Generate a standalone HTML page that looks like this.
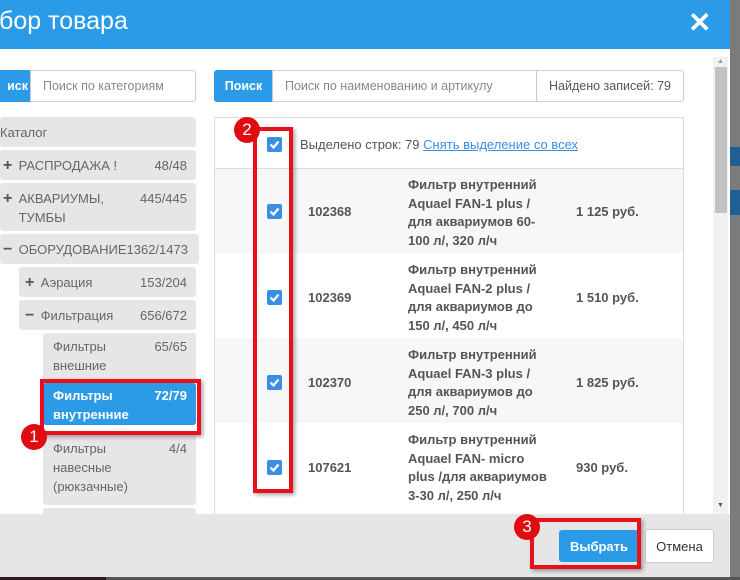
<!DOCTYPE html>
<html><head><meta charset="utf-8"><style>
*{box-sizing:border-box;margin:0;padding:0}
body{width:740px;height:580px;overflow:hidden;background:#7b7b7b;font-family:"Liberation Sans",sans-serif;font-size:12.5px;color:#555;position:relative}
.a{position:absolute}
.modal{left:0;top:0;width:730px;height:577px;background:#fff;overflow:hidden}
.hdr{left:0;top:0;width:730px;height:49px;background:#2b9be8}
.btn{background:#2b9be8;color:#fff;font-weight:bold;border-radius:3px 0 0 3px;display:flex;align-items:center;justify-content:center}
.inp{border:1px solid #ccc;color:#888;display:flex;align-items:center;padding-left:12px}
.ti{background:#e6e6e6;border-radius:3px;color:#666;font-size:13px}
.ti .c{position:absolute;right:9px;top:6px;line-height:19px}
.ti .t{position:absolute;top:6px;line-height:19px}
.p{display:inline-block;width:12px;font-weight:bold;font-size:16px;line-height:19px;color:#555;vertical-align:top}
.cb{width:15px;height:15px;background:#3a8ee6;border-radius:2px}
.cb svg{display:block}
.b{font-weight:bold;color:#555;font-size:13px}
.red{border:4px solid #e8101a;box-shadow:2px 2px 4px rgba(0,0,0,.35)}
.badge{width:26px;height:26px;border-radius:50%;background:#e00c12;color:#fff;font-size:17px;display:flex;align-items:center;justify-content:center}
</style></head><body>
<div class="a" style="left:730px;top:147px;width:10px;height:19px;background:#1f5f93"></div>
<div class="a" style="left:730px;top:190px;width:10px;height:25px;background:#1f5f93"></div>
<div class="a" style="left:0;top:577px;width:106px;height:3px;background:#2a1a22"></div>
<div class="a" style="left:106px;top:577px;width:634px;height:3px;background:#555"></div>
<div class="a modal">
<div class="a hdr"></div>
<div class="a" style="left:-1px;top:4px;color:#fff;font-size:25px;line-height:34px">бор товара</div>
<div class="a" style="left:688px;top:6px;color:#fff;font-size:28px;font-weight:bold">✕</div>

<div class="a btn" style="left:0;top:70px;width:31px;height:32px;border-radius:0;justify-content:flex-end;padding-right:3px">иск</div>
<div class="a inp" style="left:30px;top:70px;width:166px;height:32px;border-radius:0 3px 3px 0">Поиск по категориям</div>

<div class="a ti" style="left:0;top:117px;width:196px;height:30px"><span class="t" style="left:0">Каталог</span></div>
<div class="a ti" style="left:0;top:150px;width:196px;height:30px"><span class="t" style="left:3px"><span class="p">+</span> РАСПРОДАЖА !</span><span class="c">48/48</span></div>
<div class="a ti" style="left:0;top:183px;width:196px;height:48px"><span class="t" style="left:3px"><span class="p">+</span> АКВАРИУМЫ,<br><span class="p"></span> ТУМБЫ</span><span class="c">445/445</span></div>
<div class="a ti" style="left:0;top:234px;width:199px;height:30px"><span class="t" style="left:3px"><span class="p">−</span> ОБОРУДОВАНИЕ1362/1473</span></div>
<div class="a ti" style="left:19px;top:267px;width:177px;height:30px"><span class="t" style="left:6px"><span class="p">+</span> Аэрация</span><span class="c">153/204</span></div>
<div class="a ti" style="left:19px;top:300px;width:177px;height:30px"><span class="t" style="left:6px"><span class="p">−</span> Фильтрация</span><span class="c">656/672</span></div>
<div class="a ti" style="left:43px;top:333px;width:153px;height:47px"><span class="t" style="left:10px;top:4px">Фильтры<br>внешние</span><span class="c" style="top:4px">65/65</span></div>
<div class="a ti" style="left:43px;top:383px;width:153px;height:42px;background:#2b9be8;color:#fff;font-weight:bold"><span class="t" style="left:10px;top:3px">Фильтры<br>внутренние</span><span class="c" style="top:3px">72/79</span></div>
<div class="a ti" style="left:43px;top:432px;width:153px;height:73px"><span class="t" style="left:10px;top:7px">Фильтры<br>навесные<br>(рюкзачные)</span><span class="c" style="top:7px">4/4</span></div>
<div class="a ti" style="left:43px;top:508px;width:153px;height:10px"></div>

<div class="a btn" style="left:214px;top:70px;width:59px;height:32px">Поиск</div>
<div class="a inp" style="left:272px;top:70px;width:265px;height:32px">Поиск по наименованию и артикулу</div>
<div class="a inp" style="left:536px;top:70px;width:148px;height:32px;color:#555;border-radius:0 3px 3px 0">Найдено записей: 79</div>

<div class="a" style="left:214px;top:117px;width:470px;height:400px;border:1px solid #ddd"></div>
<div class="a" style="left:215px;top:168px;width:468px;height:1px;background:#ddd"></div>
<div class="a" style="left:215px;top:169px;width:468px;height:84px;background:#f7f7f7"></div>
<div class="a" style="left:215px;top:338px;width:468px;height:85px;background:#f7f7f7"></div>
<div class="a" style="left:300px;top:137px;font-size:13px;color:#555">Выделено строк: 79 <span style="color:#3a8ee6;text-decoration:underline">Снять выделение со всех</span></div>

<div class="a cb" style="left:267px;top:137px"><svg width="15" height="15"><path d="M3.5 7.5l3 3 5-6" stroke="#fff" stroke-width="2.2" fill="none"/></svg></div>
<div class="a cb" style="left:267px;top:204px"><svg width="15" height="15"><path d="M3.5 7.5l3 3 5-6" stroke="#fff" stroke-width="2.2" fill="none"/></svg></div>
<div class="a cb" style="left:267px;top:290px"><svg width="15" height="15"><path d="M3.5 7.5l3 3 5-6" stroke="#fff" stroke-width="2.2" fill="none"/></svg></div>
<div class="a cb" style="left:267px;top:375px"><svg width="15" height="15"><path d="M3.5 7.5l3 3 5-6" stroke="#fff" stroke-width="2.2" fill="none"/></svg></div>
<div class="a cb" style="left:267px;top:460px"><svg width="15" height="15"><path d="M3.5 7.5l3 3 5-6" stroke="#fff" stroke-width="2.2" fill="none"/></svg></div>

<div class="a b" style="left:308px;top:204px">102368</div>
<div class="a b" style="left:308px;top:290px">102369</div>
<div class="a b" style="left:308px;top:375px">102370</div>
<div class="a b" style="left:308px;top:460px">107621</div>
<div class="a b" style="left:408px;top:176px;line-height:18.5px">Фильтр внутренний<br>Aquael FAN-1 plus /<br>для аквариумов 60-<br>100 л/, 320 л/ч</div>
<div class="a b" style="left:408px;top:261px;line-height:18.5px">Фильтр внутренний<br>Aquael FAN-2 plus /<br>для аквариумов до<br>150 л/, 450 л/ч</div>
<div class="a b" style="left:408px;top:346px;line-height:18.5px">Фильтр внутренний<br>Aquael FAN-3 plus /<br>для аквариумов до<br>250 л/, 700 л/ч</div>
<div class="a b" style="left:408px;top:431px;line-height:18.5px">Фильтр внутренний<br>Aquael FAN- micro<br>plus /для аквариумов<br>3-30 л/, 250 л/ч</div>
<div class="a b" style="left:576px;top:204px">1 125 руб.</div>
<div class="a b" style="left:576px;top:290px">1 510 руб.</div>
<div class="a b" style="left:576px;top:375px">1 825 руб.</div>
<div class="a b" style="left:576px;top:460px">930 руб.</div>

<div class="a" style="left:713px;top:57px;width:15px;height:457px;background:#f1f1f1"></div>
<div class="a" style="left:715px;top:67px;width:12px;height:146px;background:#c1c1c1"></div>
<div class="a" style="left:717px;top:58px;color:#999;font-size:7px">▲</div>
<div class="a" style="left:717px;top:502px;color:#555;font-size:7px">▼</div>

<div class="a" style="left:0;top:514px;width:730px;height:63px;background:#e6e6e6"></div>
<div class="a btn" style="left:559px;top:530px;width:80px;height:32px;border-radius:3px;font-size:13px">Выбрать</div>
<div class="a" style="left:645px;top:529px;width:69px;height:34px;background:#fff;border:1px solid #ccc;border-radius:3px;color:#333;display:flex;align-items:center;justify-content:center;font-size:13px">Отмена</div>

<div class="a red" style="left:253px;top:127px;width:40px;height:366px"></div>
<div class="a red" style="left:40px;top:379px;width:161px;height:56px"></div>
<div class="a red" style="left:530px;top:518px;width:111px;height:51px"></div>
<div class="a badge" style="left:234px;top:117px">2</div>
<div class="a badge" style="left:21px;top:424px">1</div>
<div class="a badge" style="left:514px;top:514px">3</div>
</div>
</body></html>
